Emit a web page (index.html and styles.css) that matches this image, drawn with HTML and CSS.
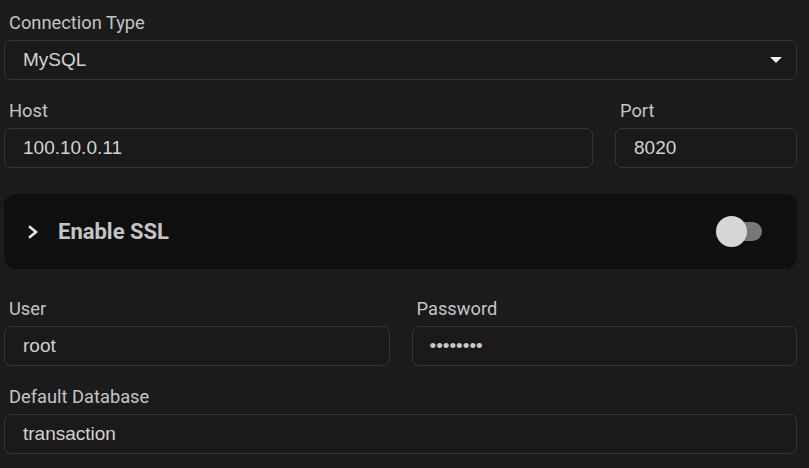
FILE: index.html
```html
<!DOCTYPE html>
<html>
<head>
<meta charset="utf-8">
<link rel="stylesheet" href="styles.css">
</head>
<body>
<div class="form">
  <div class="field">
    <div class="label">Connection Type</div>
    <div class="box select">
      <span class="value">MySQL</span>
      <svg class="caret" width="12" height="6" viewBox="0 0 12 6"><path d="M0 0H12L6 6Z" fill="#f0f0f0"/></svg>
    </div>
  </div>
  <div class="row row-host">
    <div class="field">
      <div class="label">Host</div>
      <div class="box"><span class="value">100.10.0.11</span></div>
    </div>
    <div class="field">
      <div class="label">Port</div>
      <div class="box"><span class="value">8020</span></div>
    </div>
  </div>
  <div class="card">
    <svg class="chev" width="11" height="14" viewBox="0 0 11 14"><path d="M1 1.3L8 7L1 12.7" fill="none" stroke="#e6e6e6" stroke-width="2.6"/></svg>
    <span class="card-title">Enable SSL</span>
    <div class="toggle"><span class="track"></span><span class="knob"></span></div>
  </div>
  <div class="row row-user">
    <div class="field">
      <div class="label">User</div>
      <div class="box"><span class="value">root</span></div>
    </div>
    <div class="field">
      <div class="label">Password</div>
      <div class="box"><span class="value dots">••••••••</span></div>
    </div>
  </div>
  <div class="field">
    <div class="label">Default Database</div>
    <div class="box"><span class="value">transaction</span></div>
  </div>
</div>
</body>
</html>
```
FILE: styles.css
```css
html, body {
  margin: 0;
  padding: 0;
  background: #1b1b1b;
}
body {
  font-family: Roboto, "Liberation Sans", sans-serif;
}
.form {
  padding: 12px 12px 0 4px;
}
.field {
  margin-bottom: 20px;
}
.label {
  font-family: Roboto, sans-serif;
  font-size: 18.3px;
  line-height: 21px;
  color: #c4c4c4;
  padding-left: 5px;
  margin-bottom: 7px;
}
.box {
  height: 40px;
  box-sizing: border-box;
  border: 1px solid #353535;
  border-radius: 7px;
  background: #1a1a1a;
  display: flex;
  align-items: center;
  padding: 0 18px;
}
.value {
  font-family: "Liberation Sans", Arial, sans-serif;
  font-size: 19px;
  color: #d2d2d2;
}
.dots {
  font-size: 19px;
  margin-left: -1px;
  color: #c8c8c8;
}
.select {
  justify-content: space-between;
  padding-right: 14px;
}
.row {
  display: grid;
  column-gap: 22px;
}
.row-host {
  grid-template-columns: 1fr 182px;
  margin-bottom: 26px;
}
.row-user {
  grid-template-columns: 1fr 1fr;
  margin-bottom: 20px;
}
.row .field {
  margin-bottom: 0;
}
.card {
  height: 75px;
  box-sizing: border-box;
  background: #0f0f0f;
  border-radius: 12px;
  display: flex;
  align-items: center;
  padding: 0 35px 0 24px;
  margin-bottom: 29px;
}
.chev {
  display: block;
  margin-right: 19px;
}
.card-title {
  font-family: Roboto, sans-serif;
  font-weight: 700;
  font-size: 22px;
  color: #c4c4c4;
  flex: 1;
}
.toggle {
  position: relative;
  width: 46px;
  height: 31px;
}
.track {
  position: absolute;
  right: 0;
  top: 6px;
  width: 40px;
  height: 19px;
  border-radius: 10px;
  background: #777777;
}
.knob {
  position: absolute;
  left: 0;
  top: 0;
  width: 31px;
  height: 31px;
  border-radius: 50%;
  background: #d6d6d6;
}
```
